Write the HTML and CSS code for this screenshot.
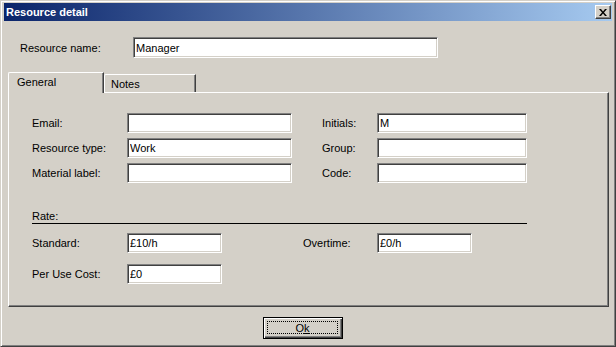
FILE: index.html
```html
<!DOCTYPE html>
<html lang="en">

<head>
    <meta charset="UTF-8">
    <title>Resource detail</title>
    <link rel="stylesheet" href="styles.css">
</head>

<body>
    <div class="window">
        <div class="titlebar">
            <span class="title">Resource detail</span>
            <button class="close" aria-label="Close">
                <svg width="8" height="7" viewBox="0 0 8 7">
                    <path d="M0 0h2l2 2.5l2-2.5h2l-3 3.5l3 3.5h-2l-2-2.5l-2 2.5h-2l3-3.5z" fill="#000" />
                </svg>
            </button>
        </div>

        <div class="dialog-body">
            <div class="name-row">
                <label class="name-label">Resource name:</label>
                <input class="field name-field" type="text" value="Manager">
            </div>

            <div class="tabs">
                <div class="tab-strip">
                    <div class="tab active">General</div>
                    <div class="tab">Notes</div>
                </div>
                <div class="tab-panel">
                    <div class="fields">
                        <label>Email:</label>
                        <input class="field" type="text" value="">
                        <span></span>
                        <label>Initials:</label>
                        <input class="field" type="text" value="M">

                        <label>Resource type:</label>
                        <input class="field" type="text" value="Work">
                        <span></span>
                        <label>Group:</label>
                        <input class="field" type="text" value="">

                        <label>Material label:</label>
                        <input class="field" type="text" value="">
                        <span></span>
                        <label>Code:</label>
                        <input class="field" type="text" value="">
                    </div>

                    <div class="rate-title">Rate:</div>

                    <div class="rates">
                        <label>Standard:</label>
                        <input class="field" type="text" value="£10/h">
                        <span></span>
                        <label>Overtime:</label>
                        <input class="field" type="text" value="£0/h">

                        <label>Per Use Cost:</label>
                        <input class="field" type="text" value="£0">
                    </div>
                </div>
            </div>

            <div class="actions">
                <button class="btn default">
                    <span class="focus">O<u>k</u></span>
                </button>
            </div>
        </div>
    </div>
</body>

</html>
```

FILE: styles.css
```css
body {
    margin: 0;
    background: #d4d0c8;
    font-family: 'Liberation Sans', Arial, sans-serif;
    font-size: 11px;
    color: #000;
}

.window {
    width: 616px;
    height: 347px;
    box-sizing: border-box;
    background: #d4d0c8;
    border: 1px solid;
    border-color: #d4d0c8 #404040 #404040 #d4d0c8;
    box-shadow: inset 1px 1px #fff, inset -1px -1px #808080;
    padding: 2px 3px 3px 3px;
    display: flex;
    flex-direction: column;
}

/* Title bar */
.titlebar {
    height: 18px;
    display: flex;
    align-items: center;
    justify-content: space-between;
    padding: 0 1px 0 2px;
    background: linear-gradient(90deg, #0a246a 0%, #a6caf0 100%);
}

.title {
    color: #fff;
    font-weight: bold;
    font-size: 11px;
}

.close {
    width: 16px;
    height: 14px;
    padding: 0;
    margin: 0;
    background: #d4d0c8;
    border: 1px solid;
    border-color: #fff #404040 #404040 #fff;
    box-shadow: inset -1px -1px #808080;
    display: flex;
    align-items: center;
    justify-content: center;
}

/* Body */
.dialog-body {
    padding-top: 16px;
    display: flex;
    flex-direction: column;
}

.name-row {
    display: flex;
    align-items: center;
    padding-left: 16px;
}

.name-label {
    width: 113px;
}

.field {
    box-sizing: border-box;
    height: 20px;
    margin: 0;
    padding: 0 2px;
    font-family: 'Liberation Sans', Arial, sans-serif;
    font-size: 11px;
    color: #000;
    background: #fff;
    border: 1px solid;
    border-color: #808080 #fff #fff #808080;
    box-shadow: inset 1px 1px #404040, inset -1px -1px #d4d0c8;
    outline: none;
}

.name-field {
    width: 305px;
    height: 21px;
}

/* Tabs */
.tabs {
    margin: 14px 3px 0 4px;
}

.tab-strip {
    height: 20px;
    display: flex;
    align-items: flex-end;
}

.tab {
    box-sizing: border-box;
    height: 18px;
    width: 92px;
    padding: 3px 0 0 6px;
    border-top: 1px solid #fff;
    border-left: 1px solid #fff;
    border-right: 1px solid #404040;
    box-shadow: inset -1px 0 #808080;
    border-top-left-radius: 2px;
}

.tab.active {
    position: relative;
    z-index: 1;
    width: 96px;
    height: 21px;
    margin-bottom: -1px;
    padding: 3px 0 0 8px;
    background: #d4d0c8;
}

.tab-panel {
    box-sizing: border-box;
    height: 215px;
    border: 1px solid;
    border-color: #fff #404040 #404040 #fff;
    box-shadow: inset -1px -1px #808080;
    padding: 20px 0 0 23px;
}

.fields {
    display: grid;
    grid-template-columns: 95px 165px 30px 55px 150px;
    grid-auto-rows: 20px;
    row-gap: 5px;
    align-items: center;
}

.rate-title {
    width: 495px;
    height: 13px;
    line-height: 13px;
    margin-top: 27px;
    border-bottom: 1px solid #000;
}

.rates {
    margin-top: 9px;
    display: grid;
    grid-template-columns: 95px 95px 81px 74px 95px;
    grid-auto-rows: 20px;
    row-gap: 11px;
    align-items: center;
}

/* Buttons */
.actions {
    display: flex;
    justify-content: center;
    padding-right: 10px;
    margin-top: 10px;
}

.btn {
    position: relative;
    box-sizing: border-box;
    width: 80px;
    height: 22px;
    padding: 0;
    background: #d4d0c8;
    font-family: 'Liberation Sans', Arial, sans-serif;
    font-size: 11px;
    color: #000;
    border: 1px solid #000;
    box-shadow: inset 1px 1px #fff, inset -1px -1px #404040, inset -2px -2px #808080;
}

.btn .focus {
    position: absolute;
    left: 3px;
    top: 3px;
    right: 4px;
    bottom: 4px;
    border: 1px dotted #000;
    display: flex;
    align-items: center;
    justify-content: center;
}
```
